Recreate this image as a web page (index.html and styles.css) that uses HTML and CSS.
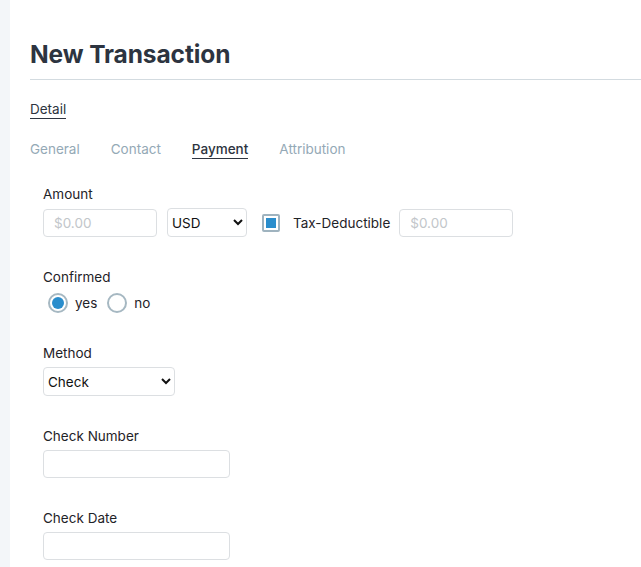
FILE: index.html
```html
<!DOCTYPE html>
<html>
<head>
<meta charset="utf-8">
<link rel="stylesheet" href="styles.css">
</head>
<body>
<div class="layout">
  <aside class="sidebar"></aside>
  <main class="main">
    <h1 class="title">New Transaction</h1>
    <div class="section"><span class="section-link">Detail</span></div>
    <nav class="tabs">
      <span class="tab">General</span>
      <span class="tab">Contact</span>
      <span class="tab tab-active">Payment</span>
      <span class="tab">Attribution</span>
    </nav>
    <form class="form">
      <div class="group">
        <label class="label">Amount</label>
        <div class="row">
          <input class="input input-amount" type="text" placeholder="$0.00">
          <select class="select select-currency"><option>USD</option></select>
          <span class="checkbox"><span class="checkbox-fill"></span></span>
          <span class="check-label">Tax-Deductible</span>
          <input class="input input-amount" type="text" placeholder="$0.00">
        </div>
      </div>
      <div class="group">
        <label class="label">Confirmed</label>
        <div class="radios">
          <span class="radio radio-on"><span class="radio-dot"></span></span>
          <span class="radio-label">yes</span>
          <span class="radio"></span>
          <span class="radio-label">no</span>
        </div>
      </div>
      <div class="group">
        <label class="label">Method</label>
        <div class="row"><select class="select select-method"><option>Check</option></select></div>
      </div>
      <div class="group">
        <label class="label">Check Number</label>
        <div class="row"><input class="input input-wide" type="text"></div>
      </div>
      <div class="group">
        <label class="label">Check Date</label>
        <div class="row"><input class="input input-wide" type="text"></div>
      </div>
    </form>
  </main>
</div>
</body>
</html>
```
FILE: styles.css
```css
html, body { margin: 0; padding: 0; background: #fff; }
body { font-family: Inter, "Noto Sans", sans-serif; color: #1f2328; }
.layout { display: flex; min-height: 567px; }
.sidebar { width: 10px; flex: none; background: #f3f6f9; }
.main { flex: 1; padding: 38px 0 0 20px; }
.title { margin: 0; font-size: 24.5px; line-height: 32px; font-weight: 700; color: #2d3440; padding-bottom: 9px; border-bottom: 1px solid #d3dbe0; letter-spacing: -0.1px; }
.section { margin-top: 18px; }
.section-link { display: inline-block; font-size: 13.5px; line-height: 18px; color: #2d3440; border-bottom: 1.5px solid #2d3440; }
.tabs { display: flex; gap: 31px; margin-top: 21px; }
.tab { font-size: 13.5px; line-height: 18px; color: #94a9b6; border-bottom: 1.5px solid transparent; }
.tab-active { color: #2d3440; font-weight: 500; border-bottom-color: #2d3440; }
.form { display: flex; flex-direction: column; gap: 31px; padding-left: 13px; margin-top: 26px; }
.group { display: flex; flex-direction: column; }
.label { font-size: 13.5px; line-height: 18px; color: #1f2328; }
.row { display: flex; align-items: center; margin-top: 5px; }
.input { box-sizing: border-box; height: 28px; border: 1px solid #dcdfe2; border-radius: 4px; padding: 0 10px; font-family: inherit; font-size: 13.5px; color: #222; background: #fff; outline: none; }
.input::placeholder { color: #c2c6ca; }
.input-amount { width: 114px; }
.input-wide { width: 187px; }
.select { box-sizing: border-box; height: 29px; border: 1px solid #dcdfe2; border-radius: 4px; font-family: inherit; font-size: 13.5px; color: #111; background: #fff; padding: 0; }
.select-currency { width: 80px; margin-left: 10px; }
.select-method { width: 132px; height: 29px; }
.checkbox { box-sizing: border-box; width: 18px; height: 18px; border: 2px solid #9fb3bf; border-radius: 2px; margin-left: 15px; padding: 2px; display: flex; }
.checkbox-fill { flex: 1; background: #2a8dcc; }
.check-label { font-size: 13.5px; margin-left: 13px; margin-right: 9px; }
.radios { display: flex; align-items: center; margin-top: 7px; height: 20px; padding-left: 5px; }
.radio { box-sizing: border-box; width: 20px; height: 20px; border: 2px solid #a6b8c2; border-radius: 50%; display: flex; align-items: center; justify-content: center; }
.radio-dot { width: 12px; height: 12px; border-radius: 50%; background: #2a8dcc; }
.radio-label { font-size: 13.5px; margin-left: 7px; margin-right: 10px; }
```
